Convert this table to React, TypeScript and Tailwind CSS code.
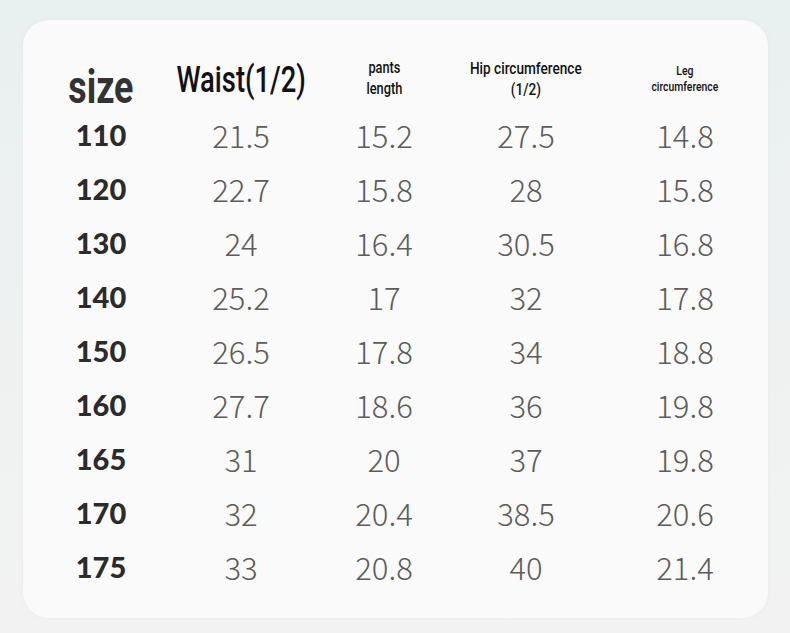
const rows: [string, string, string, string, string][] = [
  ["110", "21.5", "15.2", "27.5", "14.8"],
  ["120", "22.7", "15.8", "28", "15.8"],
  ["130", "24", "16.4", "30.5", "16.8"],
  ["140", "25.2", "17", "32", "17.8"],
  ["150", "26.5", "17.8", "34", "18.8"],
  ["160", "27.7", "18.6", "36", "19.8"],
  ["165", "31", "20", "37", "19.8"],
  ["170", "32", "20.4", "38.5", "20.6"],
  ["175", "33", "20.8", "40", "21.4"],
];

const grid = "grid grid-cols-[140px_140px_146px_138px_180px]";
const cond = "inline-block shrink-0 origin-center font-['Roboto',sans-serif] whitespace-nowrap text-center";

export default function App() {
  return (
    <div className="h-[633px] w-[790px] overflow-hidden bg-[linear-gradient(180deg,#e9f0f0_0%,#eef1f1_40%,#f2f2f2_100%)] pl-[23px] pr-[22px] pt-[20px]">
      <div className="h-[598px] rounded-[26px] bg-[#fafafa] pl-[8px] pt-[34px] shadow-[0_0_6px_rgba(0,0,0,0.03)]">
        <div className={`${grid} h-[54px] items-start text-[#111]`}>
          <div className="flex justify-center pt-[7px]">
            <span className={`${cond} scale-x-[0.78] text-[46px] font-bold leading-[52px] text-[#333]`}>size</span>
          </div>
          <div className="flex justify-center pt-[4px]">
            <span className={`${cond} scale-x-[0.76] text-[36px] font-medium leading-[44px] text-[#111]`}>
              Waist(1/2)
            </span>
          </div>
          <div className="flex justify-center pt-[3px]">
            <span className={`${cond} scale-x-[0.8] text-[16px] font-medium leading-[21px]`}>
              pants
              <br />
              length
            </span>
          </div>
          <div className="flex justify-center pt-[4px]">
            <span className={`${cond} scale-x-[0.8] text-[17px] font-medium leading-[21px]`}>
              Hip circumference
              <br />
              (1/2)
            </span>
          </div>
          <div className="flex justify-center pt-[9px]">
            <span className={`${cond} scale-x-[0.8] text-[13px] font-medium leading-[16px]`}>
              Leg
              <br />
              circumference
            </span>
          </div>
        </div>
        {rows.map((r) => (
          <div key={r[0]} className={`${grid} h-[54px] items-center text-center`}>
            <div className="font-['Lato',sans-serif] text-[29px] font-black text-[#2b2b2b]">{r[0]}</div>
            {r.slice(1).map((v, i) => (
              <div
                key={i}
                className="font-['Noto_Sans_CJK_SC','Noto_Sans',sans-serif] text-[31px] font-light text-[#5c5c5c]"
              >
                {v}
              </div>
            ))}
          </div>
        ))}
      </div>
    </div>
  );
}
